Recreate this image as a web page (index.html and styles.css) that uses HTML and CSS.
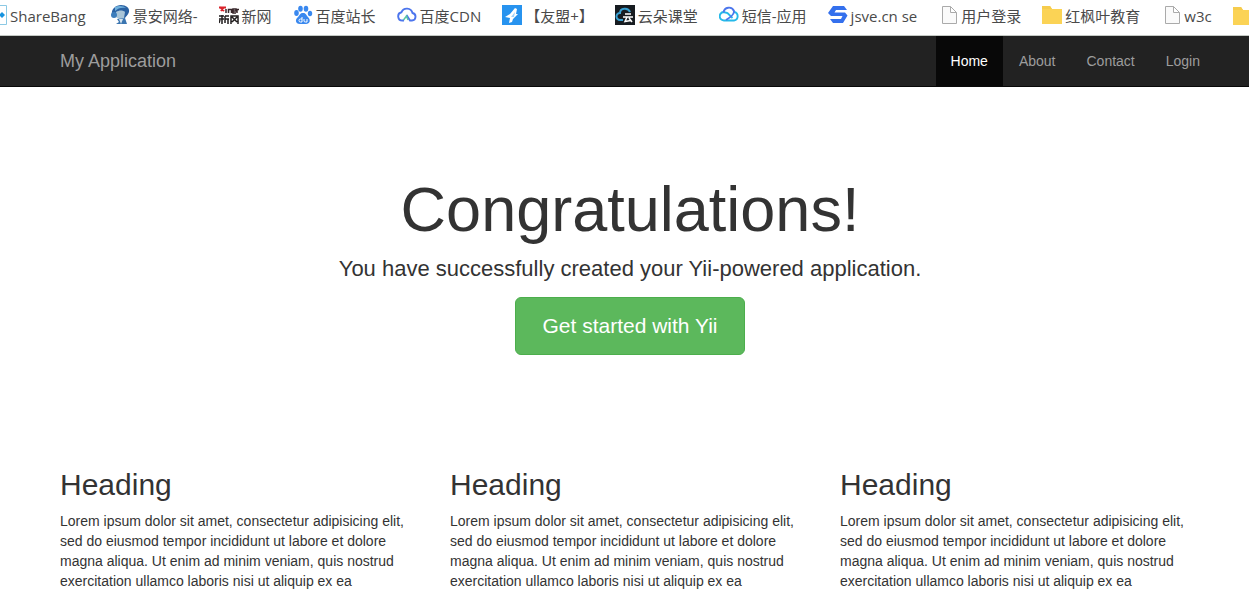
FILE: index.html
```html
<!DOCTYPE html>
<html lang="en">
<head>
<meta charset="utf-8">
<title>My Application</title>
<link rel="stylesheet" href="styles.css">
</head>
<body>
<nav class="bookmarks" aria-label="Bookmarks">
  <a href="#" class="first"><svg class="partial" viewBox="13 0 7 20"><path d="M0 .5H19.500V19.500H0" fill="#fff" stroke="#8bc9e4"/><path d="M15 7l3 3-3 3-3-3z" fill="#1593e0"/></svg>ShareBang</a>
  <a href="#"><svg viewBox="0 0 20 20"><path d="M2 9C1 4 6 0 11 0c5 0 9 3 8 7-1 3-3 4-4 6l-8-1z" fill="#2b62a3"/><path d="M5 2c4-2 9-1 11 1-4-1-8 0-11 3z" fill="#6fb0dc"/><path d="M6 7c3-2 7-2 9 0l-1 6c-3 2-6 1-8-1z" fill="#a9c5d8"/><circle cx="4" cy="10" r="3" fill="#3d7dbb"/><path d="M7 14l8-1 2 6H6l3-2z" fill="#3b75b0"/><path d="M9 14l4 0-2 5z" fill="#d5e4ee"/></svg>景安网络-</a>
  <a href="#"><svg viewBox="0 0 20 20"><path d="M1 2l4 4M5 2L2 6M0 2.500h7" stroke="#d9232b" stroke-width="2"/><path d="M7 8V4M9.500 8V4.500h3V8M14 6h3V4h-3v4h3M18 8V4.500h2" stroke="#37262a" stroke-width="1.500" fill="none"/><path d="M0 11h5M0 14h5M3 10v9M1 15l-1 3M6 11v7M6 11h4M6 14h4M9 14v5M12 19v-8h7v8M13 12l5 5M18 12l-5 5" stroke="#211d1e" stroke-width="1.500" fill="none"/></svg>新网</a>
  <a href="#"><svg viewBox="0 0 20 20"><g fill="#3988ef"><ellipse cx="3.500" cy="8" rx="2.300" ry="3"/><ellipse cx="7.500" cy="3.800" rx="2.300" ry="3"/><ellipse cx="13" cy="3.800" rx="2.300" ry="3"/><ellipse cx="17" cy="8.500" rx="2.200" ry="2.800"/><path d="M10 8c3 0 3 2 5 4 3 3 2 7-2 7H7c-5 0-5-5-2-7 2-2 2-4 5-4z"/></g><path d="M9 12v5H7.500a1.500 1.500 0 010-3H9M11 14v2q0 1 1.500 1H14v-3" fill="none" stroke="#fff"/></svg>百度站长</a>
  <a href="#"><svg viewBox="0 0 20 20"><path d="M7 15.500H5.500a4.200 4.200 0 01-1-8.300A5.800 5.800 0 0115.500 8a3.800 3.800 0 01-.5 7.500h-2L9.500 10" fill="none" stroke="#4c75ed" stroke-width="1.900"/><path d="M6.500 15l3-4 1.500 4" fill="none" stroke="#59c4a5" stroke-width="1.500"/></svg>百度CDN</a>
  <a href="#"><svg viewBox="0 0 20 20"><path d="M0 0h20v20H0z" fill="#2793ef"/><path d="M13 3l2 1-1 5 2 0-5 5-1 3-3 1 1-5-5-1 5-3z" fill="#fff"/><path d="M9 12l4-5-1 5z" fill="#9ed0f9"/></svg>【友盟+】</a>
  <a href="#"><svg viewBox="0 0 20 20"><path d="M0 0h20v20H0z" fill="#171c21"/><path d="M8 15H5a3.500 3.500 0 010-7c0-5 8-6 10-1" fill="none" stroke="#38a0d2" stroke-width="2"/><path d="M10 9h6M8 12h10M12 12l-2 4.500 6-1M14 13l3 4" fill="none" stroke="#fff" stroke-width="1.500"/></svg>云朵课堂</a>
  <a href="#"><svg viewBox="0 0 20 20"><path d="M15 7a4.300 4.300 0 010 8.500H5.500A4.200 4.200 0 014.500 7l4 1 5 5" fill="none" stroke="#25b9e9" stroke-width="1.900"/><path d="M4.500 7.500A5.500 5.500 0 0115 6c.5 3.500-3 6-8 9" fill="none" stroke="#4c76ec" stroke-width="1.900"/></svg>短信-应用</a>
  <a href="#"><svg viewBox="0 0 20 20"><path d="M5 1h11l3 4H8L6.500 7.500H17l2.500 3L15 18H5l-3-4h11l1.500-3H3L0 8z" fill="#3470ed"/></svg>jsve.cn se</a>
  <a href="#"><svg class="page" viewBox="0 0 17 20"><path d="M1.500 1.500h8l6 6v11h-14zM9.500 1.500v6h6" fill="#fafafa" stroke="#aaa"/></svg>用户登录</a>
  <a href="#"><svg viewBox="0 0 20 20"><path d="M0 1h8l2 3h10v15H0z" fill="#fbd355"/><path d="M0 1h8l2 3H0z" fill="#f6cc4d"/></svg>红枫叶教育</a>
  <a href="#"><svg class="page" viewBox="0 0 17 20"><path d="M1.500 1.500h8l6 6v11h-14zM9.500 1.500v6h6" fill="#fafafa" stroke="#aaa"/></svg>w3c</a>
  <a href="#" aria-label="Folder"><svg viewBox="0 0 20 20"><path d="M0 1h8l2 3h10v15H0z" fill="#fbd355"/><path d="M0 1h8l2 3H0z" fill="#f6cc4d"/></svg></a>
</nav>
<header class="navbar">
  <a class="brand" href="#">My Application</a>
  <nav class="menu">
    <a class="active" href="#">Home</a>
    <a href="#">About</a>
    <a href="#">Contact</a>
    <a href="#">Login</a>
  </nav>
</header>
<main class="content">
  <section class="hero">
    <h1>Congratulations!</h1>
    <p class="lead">You have successfully created your Yii-powered application.</p>
    <a class="button" href="#">Get started with Yii</a>
  </section>
  <div class="columns">
    <section>
      <h2>Heading</h2>
      <p>Lorem ipsum dolor sit amet, consectetur adipisicing elit, sed do eiusmod tempor incididunt ut labore et dolore magna aliqua. Ut enim ad minim veniam, quis nostrud exercitation ullamco laboris nisi ut aliquip ex ea</p>
    </section>
    <section>
      <h2>Heading</h2>
      <p>Lorem ipsum dolor sit amet, consectetur adipisicing elit, sed do eiusmod tempor incididunt ut labore et dolore magna aliqua. Ut enim ad minim veniam, quis nostrud exercitation ullamco laboris nisi ut aliquip ex ea</p>
    </section>
    <section>
      <h2>Heading</h2>
      <p>Lorem ipsum dolor sit amet, consectetur adipisicing elit, sed do eiusmod tempor incididunt ut labore et dolore magna aliqua. Ut enim ad minim veniam, quis nostrud exercitation ullamco laboris nisi ut aliquip ex ea</p>
    </section>
  </div>
</main>
</body>
</html>
```
FILE: styles.css
```css
* {
  box-sizing: border-box;
}

body {
  margin: 0;
  background: #fff;
  color: #333;
  font: 14px/20px "Liberation Sans", Arial, sans-serif;
}

a {
  text-decoration: none;
}

h1, h2, p {
  margin: 0;
  font-weight: 400;
}

.bookmarks {
  display: flex;
  align-items: center;
  gap: 21px;
  overflow: hidden;
  padding: 5px 0 8px;
  border-bottom: 1px solid #c4c9c4;
  font: 15px/22px "Open Sans", "Noto Sans CJK SC", sans-serif;
}

.bookmarks a {
  display: flex;
  flex: none;
  align-items: flex-start;
  gap: 3px;
  color: #4a4a4a;
  white-space: nowrap;
}

.bookmarks .first {
  margin-right: 3px;
}

.bookmarks svg {
  width: 20px;
  height: 20px;
}

.bookmarks .partial {
  width: 7px;
}

.bookmarks .page {
  width: 17px;
  margin-left: 3px;
}

.navbar {
  display: flex;
  justify-content: space-between;
  padding: 0 34px 0 60px;
  background: #222;
  border-bottom: 1px solid #080808;
}

.navbar a {
  color: #9d9d9d;
}

.navbar .brand {
  padding: 15px 0;
  font-size: 18px;
}

.menu {
  display: flex;
  gap: 1px;
}

.menu a {
  padding: 15px;
}

.menu .active {
  background: #080808;
  color: #fff;
}

.content {
  padding: 0 49px 0 60px;
}

.hero {
  display: flex;
  flex-direction: column;
  align-items: center;
  padding: 88px 0 113px;
}

h1 {
  margin-bottom: 10px;
  font-size: 63px;
  line-height: 69px;
}

.lead {
  margin-bottom: 13px;
  font-size: 22px;
  line-height: 30px;
}

.button {
  padding: 14px 26px;
  border: 1px solid #4cae4c;
  border-radius: 6px;
  background: #5cb85c;
  color: #fff;
  font-size: 21px;
  line-height: 28px;
}

.columns {
  display: grid;
  grid-template-columns: repeat(3, 1fr);
  gap: 30px;
}

h2 {
  margin-bottom: 10px;
  font-size: 30px;
  line-height: 33px;
}
```
